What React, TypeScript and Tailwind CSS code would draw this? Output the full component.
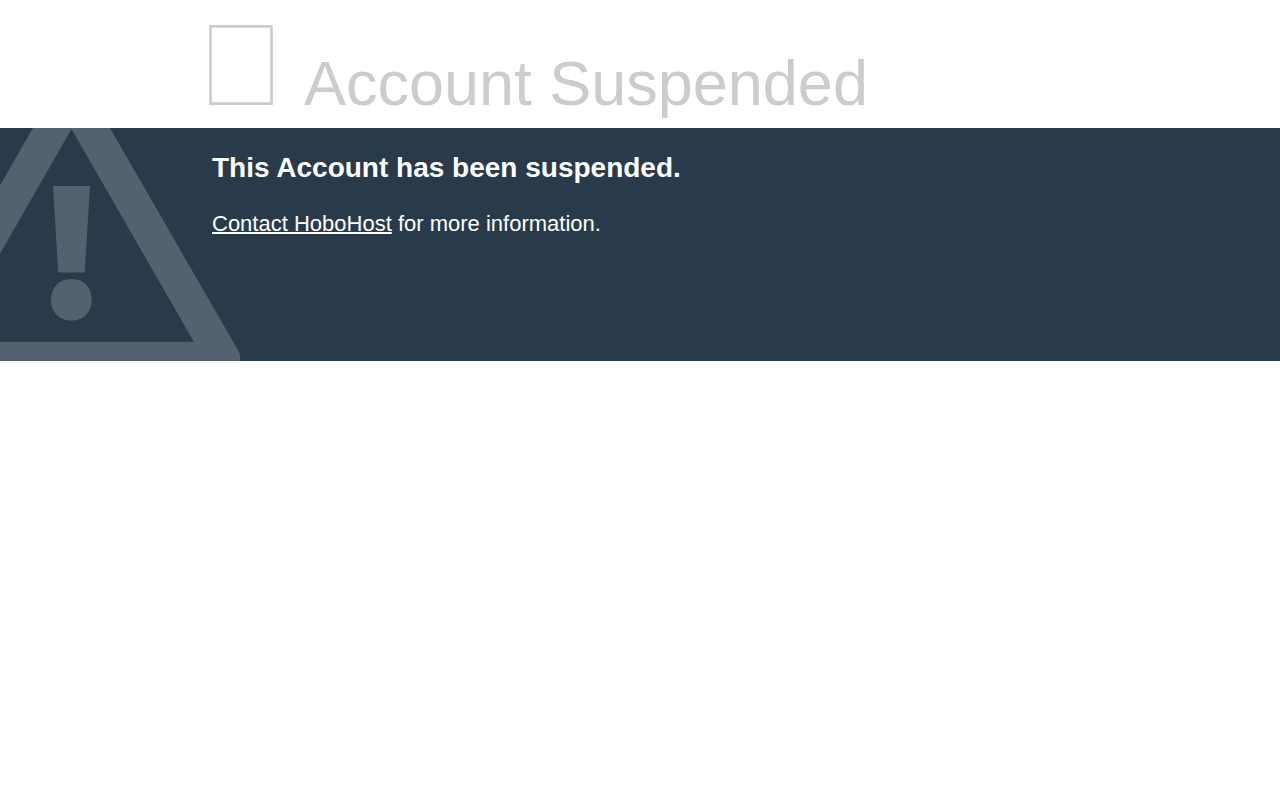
import * as React from "react";

type bannerProps = {
  title: string;
};

const WarningIcon: React.FC = () => {
  return (
    <svg
      width="240"
      height="233"
      viewBox="0 0 240 233"
      className="absolute top-0 left-0"
      fill="#54616e"
      aria-hidden="true"
    >
      <path
        fillRule="evenodd"
        d="M33 0H110L238.5 223Q240 226 240 229V233H-97V229L-95.5 223ZM71.5 1L-50.5 213.700H193.800Z"
      />
      <path d="M53 58H90L84.700 144.500H58.200Z" />
      <path d="M71.5 151C84 151 91.700 159.500 91.700 171.700C91.700 184 84 192.500 71.500 192.500C59 192.500 51 184 51 171.700C51 159.500 59 151 71.500 151Z" />
    </svg>
  );
};

const Header: React.FC<bannerProps> = (props) => {
  return (
    <header className="mx-[15%] flex h-32 items-end px-4 pb-[23px] text-[#cccccc]">
      <svg
        width="66"
        height="80"
        viewBox="0 0 66 80"
        className="mr-[30px] shrink-0"
        fill="currentColor"
        aria-hidden="true"
      >
        <path fillRule="evenodd" d="M1.200 0H64.800V80H1.200ZM3.800 2.800V77.200H62.200V2.800Z" />
      </svg>
      <h1 className="text-[63px] leading-11">{props.title}</h1>
    </header>
  );
};

const App: React.FC = () => {
  return (
    <div className="min-h-screen bg-white font-['Liberation_Sans',Arial,sans-serif]">
      <Header title="Account Suspended" />
      <main className="relative min-h-[233px] overflow-hidden bg-[#293a4a] text-white">
        <WarningIcon />
        <div className="relative mx-[15%] px-5 py-6">
          <h2 className="text-[28px] leading-8 font-bold">
            This Account has been suspended.
          </h2>
          <p className="mt-6 text-[22px] leading-8">
            <a href="#contact" className="underline decoration-2">
              Contact HoboHost
            </a>{" "}
            for more information.
          </p>
        </div>
      </main>
    </div>
  );
};

export default App;
